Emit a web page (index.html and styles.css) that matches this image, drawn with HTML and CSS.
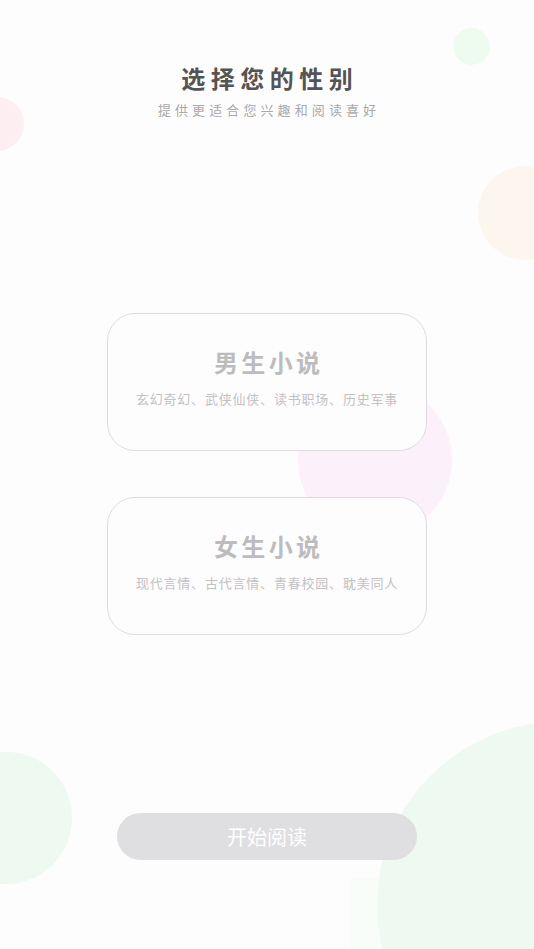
FILE: index.html
```html
<!DOCTYPE html>
<html lang="zh-CN">
<head>
<meta charset="utf-8">
<title>选择您的性别</title>
<link rel="stylesheet" href="styles.css">
</head>
<body>
<div class="page">
  <div class="deco deco-pink-left"></div>
  <div class="deco deco-green-top"></div>
  <div class="deco deco-orange"></div>
  <div class="deco deco-violet"></div>
  <div class="deco deco-green-left"></div>
  <div class="deco deco-green-rect"></div>
  <div class="deco deco-green-big"></div>

  <header class="header">
    <h1 class="title">选择您的性别</h1>
    <p class="subtitle">提供更适合您兴趣和阅读喜好</p>
  </header>

  <div class="cards">
    <div class="card">
      <div class="card-title">男生小说</div>
      <div class="card-desc">玄幻奇幻、武侠仙侠、读书职场、历史军事</div>
    </div>
    <div class="card">
      <div class="card-title">女生小说</div>
      <div class="card-desc">现代言情、古代言情、青春校园、耽美同人</div>
    </div>
  </div>

  <button class="start">开始阅读</button>
</div>
</body>
</html>
```

FILE: styles.css
```css
* { box-sizing: border-box; }
html, body { margin: 0; padding: 0; }
body {
  background: #fefdfe;
  font-family: "Noto Sans CJK SC", "Noto Sans", sans-serif;
}
.page {
  position: relative;
  width: 534px;
  height: 949px;
  overflow: hidden;
  display: flex;
  flex-direction: column;
  align-items: center;
  background: #fefdfe;
}
.deco {
  position: absolute;
  border-radius: 50%;
  z-index: 0;
}
.deco-pink-left { left: -30px; top: 97px; width: 54px; height: 54px; background: #fdeff1; }
.deco-green-top { left: 453px; top: 28px; width: 37px; height: 37px; background: #eefcef; }
.deco-orange { left: 478px; top: 166px; width: 94px; height: 94px; background: #fdf6ef; }
.deco-violet { left: 298px; top: 383px; width: 154px; height: 154px; background: #fcf0fb; }
.deco-green-left { left: -60px; top: 752px; width: 132px; height: 132px; background: #edf9f1; }
.deco-green-rect { left: 349px; top: 878px; width: 40px; height: 71px; border-radius: 0; background: #f9fdf9; }
.deco-green-big { left: 377px; top: 722px; width: 366px; height: 366px; background: #eef9f2; }

.header {
  position: relative;
  z-index: 1;
  padding-top: 62px;
  text-align: center;
}
.title {
  margin: 0;
  font-size: 24px;
  line-height: 32px;
  font-weight: 700;
  color: #545454;
  letter-spacing: 5.5px;
  padding-left: 5.5px;
}
.subtitle {
  margin: 7px 0 0;
  font-size: 13px;
  line-height: 18px;
  color: #a9a9a9;
  letter-spacing: 4.1px;
  padding-left: 4.1px;
}

.cards {
  position: relative;
  z-index: 1;
  margin-top: 194px;
  display: flex;
  flex-direction: column;
  gap: 46px;
}
.card {
  width: 320px;
  height: 138px;
  border: 1px solid #dedcdf;
  border-radius: 28px;
  background: #fefdfe;
  padding-top: 33px;
  text-align: center;
}
.card-title {
  font-size: 24px;
  line-height: 30px;
  font-weight: 700;
  color: #bdbcbd;
  letter-spacing: 3.3px;
  padding-left: 3.3px;
}
.card-desc {
  margin-top: 13px;
  font-size: 13px;
  line-height: 18px;
  color: #c3c2c3;
  letter-spacing: 0.8px;
}

.start {
  position: relative;
  z-index: 1;
  margin-top: 178px;
  width: 300px;
  height: 47px;
  border: none;
  border-radius: 24px;
  background: #dfdee0;
  color: #ffffff;
  font-family: "Noto Sans CJK SC", "Noto Sans", sans-serif;
  font-size: 20px;
  line-height: 47px;
  padding: 0;
}
```
